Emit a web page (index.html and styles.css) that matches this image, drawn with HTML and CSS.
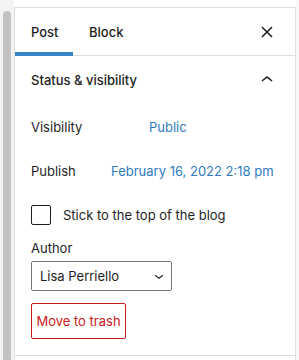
FILE: index.html
```html
<!DOCTYPE html>
<html lang="en">
<head>
<meta charset="utf-8">
<title>Post settings</title>
<link rel="stylesheet" href="styles.css">
</head>
<body>
<div class="frame">
  <div class="gutter"><div class="thumb"></div></div>
  <aside class="panel">
    <div class="tabs">
      <div class="tab active">Post</div>
      <div class="tab">Block</div>
      <div class="spacer"></div>
      <button class="icon-btn close" aria-label="Close settings">
        <svg width="24" height="24" viewBox="0 0 24 24"><path d="M7 7l10 10M17 7L7 17"/></svg>
      </button>
    </div>
    <section class="section">
      <div class="section-head">
        <span class="section-title">Status &amp; visibility</span>
        <svg class="chev" width="24" height="24" viewBox="0 0 24 24"><path d="M6.5 12.4L12 8l5.5 4.4-.9 1.2L12 10l-4.6 3.6-.9-1.2z"/></svg>
      </div>
      <div class="section-body">
        <div class="row row-vis">
          <span class="label label-vis">Visibility</span>
          <a class="link">Public</a>
        </div>
        <div class="row row-pub">
          <span class="label label-pub">Publish</span>
          <a class="link">February 16, 2022 2:18 pm</a>
        </div>
        <label class="check-row">
          <span class="checkbox"></span>
          <span>Stick to the top of the blog</span>
        </label>
        <div class="author-label">Author</div>
        <div class="select">
          <span class="select-text">Lisa Perriello</span>
          <svg width="18" height="18" viewBox="0 0 24 24"><path d="M17.5 11.6L12 16l-5.5-4.4.9-1.2L12 14l4.6-3.6 1 1.2z"/></svg>
        </div>
        <button class="trash">Move to trash</button>
      </div>
    </section>
  </aside>
  <div class="edge"></div>
</div>
</body>
</html>
```
FILE: styles.css
```css
html, body {
  margin: 0;
  padding: 0;
  height: 100%;
  background: #ffffff;
}
body {
  font-family: Inter, "Noto Sans", "Liberation Sans", sans-serif;
  font-size: 13px;
  color: #1e1e1e;
  overflow: hidden;
}
.frame {
  display: flex;
  height: 360px;
}
.gutter {
  width: 14px;
  flex: none;
  background: #f3f3f3;
  padding: 11px 0 0 3px;
  box-sizing: border-box;
  display: flex;
}
.thumb {
  width: 8px;
  background: #c2c2c2;
  border-radius: 4px 4px 0 0;
}
.panel {
  width: 280px;
  flex: none;
  margin-top: 7px;
  border-top: 1px solid #e0e0e0;
  border-left: 1px solid #e0e0e0;
  border-right: 1px solid #e0e0e0;
  background: #fff;
}
.edge {
  flex: 1;
  background: #f8f8f8;
}
.tabs {
  display: flex;
  height: 48px;
  box-shadow: inset 0 -1px 0 #e0e0e0;
}
.tab {
  padding: 0 16px;
  display: flex;
  align-items: center;
  font-weight: 500;
  height: 48px;
  box-sizing: border-box;
}
.tab.active {
  width: 58px;
  box-shadow: inset 0 -4px 0 #3582c4;
}
.spacer { flex: 1; }
.icon-btn {
  border: 0;
  background: none;
  padding: 0;
  width: 24px;
  height: 48px;
  margin-right: 16px;
  display: flex;
  align-items: center;
  justify-content: center;
}
.icon-btn svg path {
  fill: none;
  stroke: #1e1e1e;
  stroke-width: 1.6;
}
.chev { fill: #1e1e1e; }
.section {
  border-bottom: 1px solid #e0e0e0;
}
.section-head {
  height: 48px;
  padding: 0 16px;
  display: flex;
  align-items: center;
  justify-content: space-between;
}
.section-title { font-weight: 500; }
.section-body {
  padding: 0 16px 16px;
  display: flex;
  flex-direction: column;
  align-items: flex-start;
}
.row {
  display: flex;
  align-items: center;
  height: 32px;
}
.row-vis { margin-top: 7px; }
.row-pub { margin-top: 12px; }
.label-vis { width: 118px; }
.label-pub { width: 80px; }
.link { color: #2f7bbf; }
.check-row {
  display: flex;
  align-items: center;
  gap: 12px;
  margin-top: 18px;
  height: 20px;
}
.checkbox {
  width: 20px;
  height: 20px;
  box-sizing: border-box;
  border: 1px solid #1e1e1e;
  border-radius: 2px;
}
.author-label {
  margin-top: 15px;
  line-height: 16px;
}
.select {
  margin-top: 5px;
  width: 141px;
  height: 30px;
  box-sizing: border-box;
  border: 1px solid #757575;
  border-radius: 2px;
  display: flex;
  align-items: center;
  justify-content: space-between;
  padding: 0 3px 0 8px;
}
.select svg { fill: #1e1e1e; }
.trash {
  margin-top: 12px;
  height: 36px;
  width: 95px;
  padding: 0;
  font: inherit;
  color: #cc1818;
  background: #fff;
  border: 1px solid #cc1818;
  border-radius: 2px;
}
```
